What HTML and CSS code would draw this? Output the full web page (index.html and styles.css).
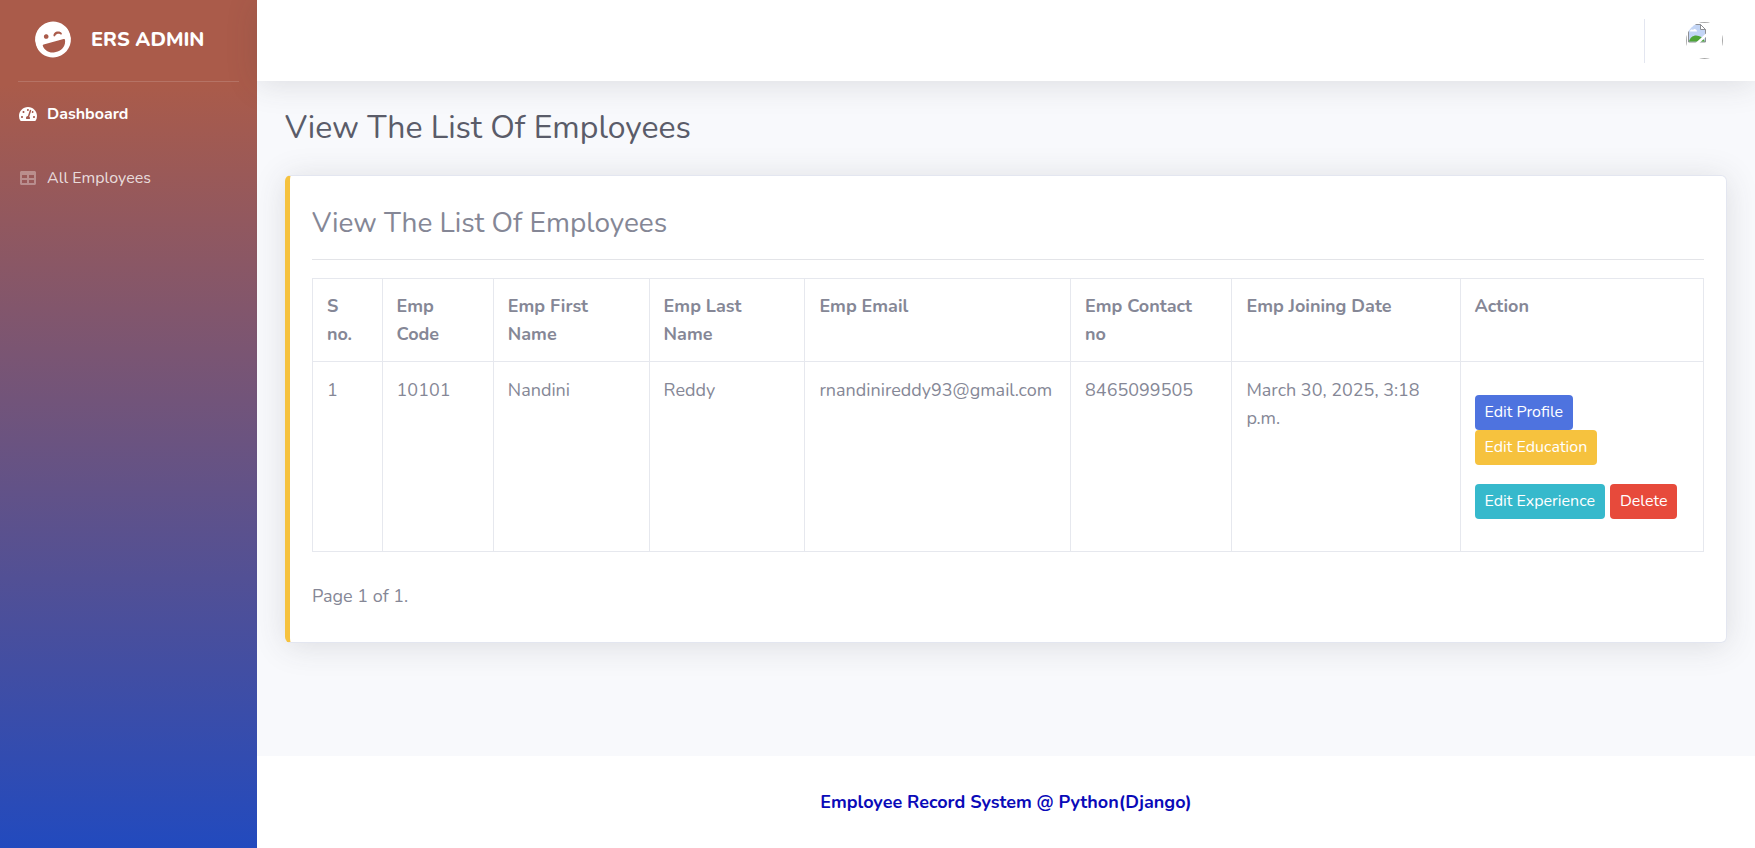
FILE: index.html
```html
<!DOCTYPE html>
<html lang="en">
<head>
<meta charset="utf-8">
<meta name="viewport" content="width=device-width, initial-scale=1">
<title>ERS Admin</title>
<link rel="stylesheet" href="styles.css">
</head>
<body>
<div class="wrapper">
  <nav class="sidebar">
    <a class="brand" href="#">
      <svg class="brand-icon" viewBox="0 0 496 512" aria-hidden="true"><path fill="currentColor" fill-rule="evenodd" d="M248 8C111 8 0 119 0 256s111 248 248 248 248-111 248-248S385 8 248 8zm20.1 198.1c4-25.2 34.2-42.1 59.9-42.1s55.9 16.900 59.9 42.1c1.7 11.1-11.400 18.300-19.800 10.800l-9.500-8.500c-14.800-13.200-46.200-13.200-61 0L288 217c-8.400 7.400-21.600.3-19.900-10.900zM168 160c17.700 0 32 14.300 32 32s-14.300 32-32 32-32-14.300-32-32 14.300-32 32-32zM105 288h286c9.600 0 17 8.400 15.900 17.900C398 377 340 432 268 432h-40C156 432 98 377 89 306c-1-9.600 6.400-18 16-18z"/></svg>
      <span class="brand-text">ERS ADMIN</span>
    </a>
    <hr class="sidebar-divider">
    <ul class="nav">
      <li><a class="nav-link active" href="#">
        <svg class="nav-icon" viewBox="0 0 576 512" aria-hidden="true"><path fill="currentColor" d="M288 32C128.940 32 0 160.940 0 320c0 52.800 14.250 102.260 39.060 144.800 5.610 9.620 16.300 15.200 27.440 15.200h443c11.140 0 21.830-5.580 27.440-15.200C561.750 422.260 576 372.800 576 320c0-159.060-128.940-288-288-288zm0 64c14.710 0 26.580 10.130 30.320 23.650-1.110 2.260-2.640 4.230-3.450 6.670l-9.220 27.670c-5.130 3.490-10.970 6.010-17.640 6.010-17.670 0-32-14.330-32-32S270.330 96 288 96zM96 384c-17.670 0-32-14.330-32-32s14.330-32 32-32 32 14.330 32 32-14.330 32-32 32zm48-160c-17.670 0-32-14.330-32-32s14.330-32 32-32 32 14.330 32 32-14.330 32-32 32zm246.770-72.410l-61.330 184C343.130 347.330 352 364.540 352 384c0 11.720-3.380 22.550-8.880 32H232.880c-5.500-9.450-8.880-20.280-8.880-32 0-33.940 26.500-61.430 59.900-63.590l61.340-184.010c4.170-12.560 17.730-19.450 30.360-15.170 12.570 4.190 19.350 17.790 15.170 30.360zm14.660 57.200l15.520-46.550c3.470-1.290 7.130-2.230 11.050-2.230 17.670 0 32 14.330 32 32s-14.330 32-32 32c-11.380-.01-20.890-6.280-26.570-15.220zM480 384c-17.670 0-32-14.330-32-32s14.330-32 32-32 32 14.330 32 32-14.330 32-32 32z"/></svg>
        <span>Dashboard</span></a></li>
      <li><a class="nav-link" href="#">
        <svg class="nav-icon" viewBox="0 0 512 512" aria-hidden="true"><path fill="currentColor" d="M464 32H48C21.490 32 0 53.490 0 80v352c0 26.510 21.490 48 48 48h416c26.510 0 48-21.490 48-48V80c0-26.510-21.490-48-48-48zM224 416H64v-96h160v96zm0-160H64v-96h160v96zm224 160H288v-96h160v96zm0-160H288v-96h160v96z"/></svg>
        <span>All Employees</span></a></li>
    </ul>
  </nav>

  <div class="content">
    <header class="topbar">
      <span class="topbar-divider"></span>
      <a class="profile" href="#" aria-label="Profile">
        <svg class="avatar" viewBox="0 0 37 37" aria-hidden="true">
          <defs><clipPath id="round"><circle cx="18.500" cy="18.500" r="18.500"/></clipPath></defs>
          <g clip-path="url(#round)">
            <rect x=".5" y=".5" width="36" height="36" fill="#fff" stroke="#a8a8a8"/>
            <path d="M2.500 2.500h12l5 5v12.500h-17z" fill="#c3d5f5" stroke="#8d8f94"/>
            <path d="M14.500 2.500v5h5z" fill="#fff" stroke="#8d8f94"/>
            <path d="M4 9.500c0-2 2-2.500 3-1.500 1-2 4-1 4 1.500z" fill="#fff"/>
            <path d="M3 19.500c1-4 4-6 7-6 4 0 7 2 9 6z" fill="#4fa536"/>
            <path d="M9.500 21L21 10.500v3.500l-7.500 7z" fill="#fff"/>
          </g>
        </svg>
      </a>
    </header>

    <main class="page">
      <h1 class="page-title">View The List Of Employees</h1>
      <section class="card">
        <h2 class="card-title">View The List Of Employees</h2>
        <hr class="card-divider">
        <table class="table">
          <colgroup><col class="c-no"><col class="c-code"><col class="c-name"><col class="c-name"><col class="c-email"><col class="c-contact"><col class="c-date"><col class="c-action"></colgroup>
          <thead>
            <tr><th scope="col">S<br>no.</th><th scope="col">Emp Code</th><th scope="col">Emp First Name</th><th scope="col">Emp Last Name</th><th scope="col">Emp Email</th><th scope="col">Emp Contact no</th><th scope="col">Emp Joining Date</th><th scope="col">Action</th></tr>
          </thead>
          <tbody>
            <tr>
              <td>1</td><td>10101</td><td>Nandini</td><td>Reddy</td><td>rnandinireddy93@gmail.com</td><td>8465099505</td><td>March 30, 2025, 3:18 p.m.</td>
              <td>
                <div class="actions">
                  <a class="btn btn-primary" href="#">Edit Profile</a>
                  <a class="btn btn-warning" href="#">Edit Education</a>
                </div>
                <div class="actions">
                  <a class="btn btn-info" href="#">Edit Experience</a>
                  <a class="btn btn-danger" href="#">Delete</a>
                </div>
              </td>
            </tr>
          </tbody>
        </table>
        <p class="pager">Page 1 of 1.</p>
      </section>
    </main>

    <footer class="footer">Employee Record System @ Python(Django)</footer>
  </div>
</div>
</body>
</html>
```
FILE: styles.css
```css
*, *::before, *::after { box-sizing: border-box; }

body {
  margin: 0;
  font-family: Nunito, Lato, "Open Sans", sans-serif;
  font-size: 18px;
  line-height: 28px;
  color: #858796;
  background: #fff;
}

a { text-decoration: none; color: inherit; }

.wrapper { display: flex; min-height: 100vh; }

.sidebar {
  flex: 0 0 257px;
  color: #fff;
  background: linear-gradient(180deg, #aa5b4a 10%, #224abe 100%);
}

.brand {
  display: flex;
  align-items: center;
  gap: 20px;
  height: 81px;
  padding: 0 35px 2px;
  font-size: 20px;
  font-weight: 800;
}
.brand-icon { width: 36px; height: 37px; transform: rotate(-15deg); }

.sidebar-divider {
  margin: 0 18px;
  border: 0;
  border-top: 1px solid rgba(255, 255, 255, .15);
}

.nav { margin: 0; padding: 0; list-style: none; }
.nav-link {
  display: flex;
  align-items: center;
  gap: 10px;
  height: 64px;
  padding: 0 19px;
  font-size: 16px;
  color: rgba(255, 255, 255, .8);
}
.nav-link.active { font-weight: 700; color: #fff; }
.nav-icon { width: 18px; height: 16px; }
.nav-link:not(.active) .nav-icon { opacity: .4; }

.content {
  flex: 1;
  min-width: 0;
  display: flex;
  flex-direction: column;
  background: #f8f9fc;
}

.topbar {
  display: flex;
  align-items: center;
  justify-content: flex-end;
  gap: 41px;
  height: 81px;
  padding: 0 32px;
  background: #fff;
  box-shadow: 0 3px 32px rgba(58, 59, 69, .15);
}
.topbar-divider { height: 44px; border-left: 1px solid #e3e6f0; }
.profile { display: flex; }
.avatar { width: 37px; height: 37px; }

.page { flex: 1; padding: 28px 28px 0; }

.page-title {
  margin: 0 0 28px;
  font-size: 32px;
  font-weight: 400;
  line-height: 38px;
  color: #5a5c69;
}

.card {
  padding: 28px 22px;
  background: #fff;
  border: 1px solid #e3e6f0;
  border-left: 5px solid #f6c23e;
  border-radius: 6px;
  box-shadow: 0 3px 32px rgba(58, 59, 69, .15);
}
.card-title {
  margin: 0;
  font-size: 28px;
  font-weight: 400;
  line-height: 38px;
}
.card-divider {
  margin: 17px 0 18px;
  border: 0;
  border-top: 1px solid #e3e4e8;
}

.table { width: 100%; border-collapse: collapse; table-layout: fixed; }
.table th, .table td {
  padding: 13px 14px;
  text-align: left;
  vertical-align: top;
  border: 1px solid #e6e8ee;
}
.table th { font-weight: 700; }
.table td { padding-top: 14px; }
.c-no { width: 5%; }
.c-code { width: 8%; }
.c-name { width: 11.200%; }
.c-email { width: 19.100%; }
.c-contact { width: 11.600%; }
.c-date { width: 16.400%; }

.actions {
  display: flex;
  flex-wrap: wrap;
  column-gap: 5px;
  margin: 19px 0;
}
.btn {
  padding: 5px 10px;
  font-size: 16px;
  line-height: 25px;
  color: #fff;
  border-radius: 4px;
}
.btn-primary { background: #4e73df; }
.btn-warning { background: #f6c23e; }
.btn-info { background: #36b9cc; }
.btn-danger { background: #e74a3b; }

.pager { margin: 30px 0 4px; }

.footer {
  padding: 32px 28px;
  text-align: center;
  font-weight: 700;
  color: #0a0ab8;
  background: #fff;
}
```
